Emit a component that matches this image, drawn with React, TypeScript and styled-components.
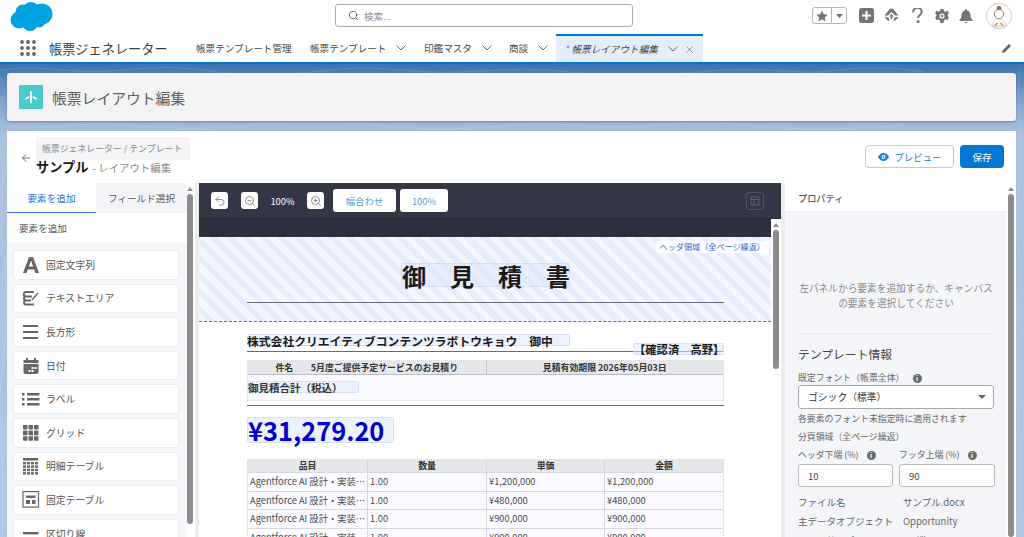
import React from "react";
import styled, { createGlobalStyle } from "styled-components";
import { ArrowLeft, Search, Undo2, X, ZoomIn, ZoomOut } from "lucide-react";

const Global = createGlobalStyle`
  html, body { margin: 0; padding: 0; height: 100%; overflow: hidden; }
  body { font-family: "Noto Sans CJK JP", "Noto Sans", sans-serif; color: #444; text-spacing-trim: space-all; }
  #root { height: 100%; }
  * { box-sizing: border-box; }
`;

const Screen = styled.div`
  position: relative;
  isolation: isolate;
  width: 1024px;
  height: 537px;
  display: flex;
  flex-direction: column;
  overflow: hidden;
  background: linear-gradient(180deg, #3a70ad 62px, #7fa0cb 100px, #aac1df 135px, #b0c5e1 100%);
`;
const Contours = styled.svg`
  position: absolute;
  inset: 0;
  z-index: -1;
`;

const TopBar = styled.div`
  height: 34px;
  background: #fff;
  display: grid;
  grid-template-columns: 335px 298px 1fr;
  align-items: start;
`;
const LogoCell = styled.div`
  padding: 1px 0 0 10px;
`;
const SearchBox = styled.div`
  margin-top: 4px;
  height: 23px;
  border: 1px solid #b0adab;
  border-radius: 3px;
  display: flex;
  align-items: center;
  gap: 5px;
  padding-left: 12px;
  font-size: 9.5px;
  color: #8b8b8b;
`;
const Actions = styled.div`
  display: flex;
  align-items: center;
  height: 32px;
  padding-left: 179px;
`;
const FavGroup = styled.div`
  width: 35px;
  height: 17px;
  border: 1px solid #b5b5b5;
  border-radius: 3px;
  display: grid;
  grid-template-columns: 18px 1fr;
  align-items: center;
  justify-items: center;
  margin-top: -1px;
  & > div:last-child {
    border-left: 1px solid #b5b5b5;
    height: 100%;
    width: 100%;
    display: flex;
    align-items: center;
    justify-content: center;
  }
`;
const ActionIcon = styled.div<{ $gap: number }>`
  margin-left: ${(p) => p.$gap}px;
  display: flex;
  margin-top: -1px;
`;
const Avatar = styled.div`
  margin-left: 13px;
  width: 26px;
  height: 26px;
  border-radius: 50%;
  border: 1px solid #c9c9c9;
  background: #fff;
  display: flex;
  align-items: center;
  justify-content: center;
`;

const NavBar = styled.div`
  height: 30px;
  background: #fff;
  border-bottom: 2px solid #0176d3;
  display: flex;
  align-items: center;
  padding-left: 20px;
`;
const AppName = styled.div`
  margin-left: 13px;
  width: 147px;
  font-size: 13.2px;
  color: #3e3e3c;
  white-space: nowrap;
`;
const NavItem = styled.div<{ $w: number }>`
  width: ${(p) => p.$w}px;
  display: flex;
  align-items: center;
  font-size: 9.6px;
  color: #444;
  white-space: nowrap;
  gap: 10px;
`;
const ActiveTab = styled.div`
  width: 147px;
  height: 28px;
  align-self: flex-start;
  background: #e3eefa;
  border-top: 2px solid #0176d3;
  display: flex;
  align-items: center;
  padding-left: 8px;
  font-size: 9.6px;
  font-style: italic;
  color: #444;
  white-space: nowrap;
  & > b {
    color: #3c97e8;
    font-weight: 400;
    margin-right: 3px;
  }
  & > svg:first-of-type { margin-left: 10px; }
  & > svg:last-of-type { margin-left: 6px; }
`;
const NavEnd = styled.div`
  margin-left: auto;
  padding-right: 12px;
  display: flex;
`;

const PageHead = styled.div`
  margin: 9px 8px 0 7px;
  height: 48px;
  background: #f3f3f3;
  border-radius: 3px;
  box-shadow: 0 1px 2px rgba(0, 0, 0, 0.25);
  display: flex;
  align-items: center;
  gap: 9px;
  padding-left: 12px;
  font-size: 14.8px;
  color: #5e5e5e;
`;
const TealIcon = styled.div`
  width: 24px;
  height: 24px;
  background: #4bc9cb;
  display: flex;
  align-items: center;
  justify-content: center;
`;

const MainCard = styled.div`
  margin: 10px 8px 0 7px;
  flex: 1;
  min-height: 0;
  background: #fff;
  display: flex;
  flex-direction: column;
`;
const CardHead = styled.div`
  height: 52px;
  flex: none;
  display: flex;
  align-items: flex-start;
  padding: 6px 12px 0 13px;
`;
const Back = styled.div`
  display: flex;
  margin-top: 15px;
  width: 16px;
  color: #666;
`;
const Crumbs = styled.div`
  display: flex;
  flex-direction: column;
`;
const Crumb = styled.div`
  width: 154px;
  height: 23px;
  background: #f3f4f6;
  font-size: 8.9px;
  color: #8a8a8a;
  line-height: 23px;
  padding-left: 6px;
  white-space: nowrap;
`;
const TitleLine = styled.div`
  display: flex;
  align-items: baseline;
  gap: 4px;
  margin-top: -3px;
  & > strong { font-size: 13.2px; color: #181818; font-weight: 700; }
  & > span { font-size: 10.4px; color: #8a8a8a; }
`;
const HeadButtons = styled.div`
  margin-left: auto;
  margin-top: 8px;
  display: flex;
  gap: 6px;
`;
const OutlineBtn = styled.div`
  width: 89px;
  height: 23px;
  border: 1px solid #c9c9c9;
  border-radius: 4px;
  display: flex;
  align-items: center;
  justify-content: center;
  gap: 6px;
  font-size: 9.4px;
  color: #1b7fd6;
`;
const SaveBtn = styled.div`
  width: 44px;
  height: 23px;
  background: #0176d3;
  border-radius: 4px;
  color: #fff;
  font-size: 9.5px;
  display: flex;
  align-items: center;
  justify-content: center;
`;

const Columns = styled.div`
  flex: 1;
  min-height: 0;
  display: grid;
  grid-template-columns: 192px 586px 231px;
  background: #ececec;
`;
const Side = styled.div`
  display: flex;
  min-height: 0;
  overflow: hidden;
`;
const SideBody = styled.div<{ $w: number }>`
  width: ${(p) => p.$w}px;
  background: #fff;
  overflow: hidden;
`;
const Rail = styled.div<{ $w: number; $pad: number }>`
  width: ${(p) => p.$w}px;
  padding-left: ${(p) => p.$pad}px;
  background: #fff;
  display: flex;
  flex-direction: column;
  flex: none;
`;
const RailArrow = styled.div`
  margin-top: 4px;
  width: 0;
  height: 0;
  border-left: 3px solid transparent;
  border-right: 3px solid transparent;
  border-bottom: 4px solid #8c8c8c;
`;
const Thumb = styled.div<{ $h: number }>`
  margin-top: 3px;
  width: 6px;
  height: ${(p) => p.$h}px;
  background: #8c8c8c;
  border-radius: 3px;
`;

const PanelTabs = styled.div`
  height: 30px;
  display: grid;
  grid-template-columns: 89px 1fr;
  font-size: 9.6px;
`;
const PanelTab = styled.div<{ $active?: boolean }>`
  display: flex;
  align-items: center;
  justify-content: center;
  white-space: nowrap;
  color: ${(p) => (p.$active ? "#2f6fe0" : "#5a5a5a")};
  background: ${(p) => (p.$active ? "#fff" : "#f3f4f8")};
  border-bottom: ${(p) => (p.$active ? "1px solid #2f6fe0" : "none")};
`;
const PanelLabel = styled.div`
  height: 30px;
  padding-left: 12px;
  display: flex;
  align-items: center;
  font-size: 9.6px;
  color: #5a5a5a;
`;
const Palette = styled.div`
  background: #f5f6fa;
  padding: 7px 8px 0 6px;
  height: 400px;
  display: flex;
  flex-direction: column;
  gap: 4px;
`;
const PaletteItem = styled.div`
  flex: none;
  height: 29.6px;
  background: #fff;
  border: 1px solid #ececf0;
  border-radius: 3px;
  display: flex;
  align-items: center;
  font-size: 9.8px;
  color: #555;
  padding-left: 8px;
  gap: 6px;
  & > svg { flex: none; }
`;

const Center = styled.div`
  background: #fff;
  display: flex;
  flex-direction: column;
  min-height: 0;
  overflow: hidden;
  width: 582px;
`;
const ToolBar = styled.div`
  flex: none;
  height: 36px;
  background: #333745;
  border-bottom: 1px solid #2a2d39;
  display: flex;
  align-items: center;
  padding-left: 12px;
`;
const ToolBtn = styled.div<{ $ml?: number }>`
  width: 17px;
  height: 17px;
  background: #fff;
  border-radius: 3px;
  margin-left: ${(p) => p.$ml ?? 0}px;
  display: flex;
  align-items: center;
  justify-content: center;
  color: #777;
`;
const ZoomText = styled.div`
  width: 45px;
  margin-left: 2px;
  text-align: center;
  font-size: 9.4px;
  color: #fff;
`;
const TextBtn = styled.div<{ $w: number; $ml: number }>`
  width: ${(p) => p.$w}px;
  margin-left: ${(p) => p.$ml}px;
  height: 23px;
  background: #fff;
  border-radius: 3px;
  display: flex;
  align-items: center;
  justify-content: center;
  font-size: 9.4px;
  color: #4d9de0;
`;
const GhostBtn = styled.div`
  margin-left: auto;
  margin-right: 17px;
  width: 18px;
  height: 18px;
  border: 1px solid #4f5361;
  border-radius: 3px;
  display: flex;
  align-items: center;
  justify-content: center;
`;
const CanvasRow = styled.div`
  flex: 1;
  min-height: 0;
  display: flex;
`;
const CanvasScroll = styled.div`
  flex: 1;
  overflow: hidden;
  background: #fff;
`;
const DarkStrip = styled.div`
  height: 18px;
  background: #2c303d;
`;
const HeaderBand = styled.div`
  position: relative;
  height: 85px;
  border-bottom: 1px dashed #2f7bf5;
  background: repeating-linear-gradient(45deg, #f4f7ff 0 6px, #e4ecfd 6px 12px);
  padding: 26px 47px 0 48px;
`;
const BandTag = styled.div`
  position: absolute;
  top: 4px;
  right: 2px;
  padding: 0 4px;
  height: 12px;
  line-height: 12px;
  background: rgba(255, 255, 255, 0.85);
  font-size: 8.15px;
  color: #3566de;
  white-space: nowrap;
`;
const FieldBox = styled.div`
  background: rgba(221, 231, 252, 0.55);
  border: 1px dotted #c3cff0;
  border-radius: 2px;
  white-space: nowrap;
  color: #1a1a1a;
  font-weight: 700;
`;
const DocTitle = styled(FieldBox)`
  width: 169px;
  height: 24px;
  margin: 0 auto;
  font-size: 24px;
  line-height: 23px;
  text-align: center;
`;
const Rule = styled.div`
  height: 1px;
  background: #6b6b6b;
`;
const BandRule = styled(Rule)`
  margin-top: 15px;
`;
const DocBody = styled.div`
  position: relative;
  padding: 12px 47px 0 48px;
`;
const Company = styled(FieldBox)`
  width: 323px;
  height: 12px;
  font-size: 11.8px;
  line-height: 11px;
  text-indent: -1px;
`;
const CompanyRule = styled(Rule)`
  margin-top: 5px;
`;
const Stamp = styled(FieldBox)`
  position: absolute;
  left: 434px;
  top: 21px;
  width: 91px;
  height: 12px;
  font-size: 11.3px;
  line-height: 11px;
  text-align: center;
`;
const InfoBlock = styled.div`
  margin-top: 8px;
  height: 41px;
  background: #fbfbff;
  border: 1px dotted #cfcff0;
`;
const InfoHead = styled.div`
  height: 14px;
  display: grid;
  grid-template-columns: 1fr 1fr;
  background: #e6e7eb;
  border-bottom: 1px solid #b9bccb;
  font-size: 8.9px;
  font-weight: 700;
  line-height: 13px;
  color: #333;
  & > div { text-align: center; white-space: pre; }
  & > div + div { border-left: 1px solid #c4c6d0; }
`;
const TotalLabel = styled(FieldBox)`
  margin-top: 6px;
  width: 111px;
  height: 12px;
  font-size: 10.5px;
  line-height: 11px;
  color: #333;
  text-indent: -1px;
`;
const BlockRule = styled(Rule)`
  margin-top: 4px;
`;
const Amount = styled(FieldBox)`
  margin-top: 11px;
  width: 147px;
  height: 26px;
  font-size: 25.4px;
  line-height: 24px;
  color: #0000cd;
`;
const LineTable = styled.div`
  margin-top: 16px;
  border: 1px dotted #c5c5ea;
  border-bottom: none;
`;
const LineRow = styled.div<{ $head?: boolean }>`
  display: grid;
  grid-template-columns: 119px 119px 118px 1fr;
  height: ${(p) => (p.$head ? "13px" : "18.7px")};
  background: ${(p) => (p.$head ? "#e6e7eb" : "#fbfbff")};
  border-bottom: 1px solid #d6d7de;
  font-size: ${(p) => (p.$head ? "8.9px" : "9.3px")};
  font-weight: ${(p) => (p.$head ? 700 : 400)};
  color: ${(p) => (p.$head ? "#333" : "#4a4a4a")};
  line-height: ${(p) => (p.$head ? "12px" : "17px")};
  & > div {
    padding: 0 ${(p) => (p.$head ? 0 : 2)}px;
    text-align: ${(p) => (p.$head ? "center" : "left")};
    white-space: nowrap;
  }
  & > div + div { border-left: 1px solid #d6d7de; }
`;

const PropBody = styled.div`
  background: #f3f5f9;
  height: 360px;
  padding: 0 12px 0 13px;
`;
const PropTitle = styled.div`
  height: 29px;
  background: #fff;
  border-bottom: 1px solid #eceef2;
  padding: 2px 0 0 13px;
  display: flex;
  align-items: center;
  font-size: 9.2px;
  font-weight: 500;
  color: #5a5a5a;
`;
const EmptyNote = styled.div`
  padding-top: 69px;
  height: 122px;
  border-bottom: 1px solid #e6e8ec;
  text-align: center;
  font-size: 9.7px;
  line-height: 15px;
  color: #8a8a8a;
  white-space: nowrap;
`;
const SectionTitle = styled.div`
  margin-top: 11px;
  font-size: 11.8px;
  color: #444;
  line-height: 18px;
`;
const FieldLabel = styled.div<{ $mt?: number }>`
  margin-top: ${(p) => p.$mt ?? 0}px;
  display: flex;
  align-items: center;
  gap: 8px;
  font-size: 8.9px;
  line-height: 14px;
  color: #666;
  white-space: nowrap;
`;
const InfoDot = styled.span`
  width: 9px;
  height: 9px;
  border-radius: 50%;
  background: #6b6b6b;
  color: #fff;
  font-size: 6.5px;
  line-height: 9px;
  text-align: center;
  font-weight: 700;
`;
const SelectBox = styled.div`
  height: 24px;
  background: #fff;
  border: 1px solid #a9a9a9;
  border-radius: 3px;
  display: flex;
  align-items: center;
  justify-content: space-between;
  padding: 0 7px 0 9px;
  font-size: 9.8px;
  color: #333;
`;
const Caret = styled.span`
  width: 0;
  height: 0;
  border-left: 4px solid transparent;
  border-right: 4px solid transparent;
  border-top: 4px solid #666;
`;
const HalfGrid = styled.div`
  margin-top: 4px;
  display: grid;
  grid-template-columns: 95px 96px;
  gap: 2px 6px;
`;
const NumberBox = styled.div`
  height: 23px;
  background: #fff;
  border: 1px solid #b9b9b9;
  border-radius: 3px;
  display: flex;
  align-items: center;
  padding-left: 9px;
  font-size: 9.5px;
  color: #444;
`;
const MetaList = styled.div`
  margin-top: 6px;
`;
const MetaRow = styled.div`
  display: grid;
  grid-template-columns: 105px 1fr;
  height: 19px;
  font-size: 9.5px;
  line-height: 19px;
  color: #666;
  white-space: nowrap;
`;

const Cloud = () => (
  <svg width="43" height="31" viewBox="0 0 43 31">
    <g fill="#00a1e0">
      <circle cx="13" cy="11" r="7.5" />
      <circle cx="21" cy="9" r="8" />
      <circle cx="32" cy="13" r="10.5" />
      <circle cx="9" cy="19" r="8.5" />
      <circle cx="20" cy="22" r="8" />
      <circle cx="29" cy="20" r="6.5" />
    </g>
  </svg>
);

const Waffle = () => (
  <svg width="16" height="16" viewBox="0 0 16 16" fill="#666">
    {[2, 8, 14].flatMap((y) => [2, 8, 14].map((x) => <circle key={`${x}-${y}`} cx={x} cy={y} r="1.9" />))}
  </svg>
);

const Chev = () => (
  <svg width="10" height="6" viewBox="0 0 10 6" fill="none" stroke="#666" strokeWidth="1">
    <path d="M.5.5L5 5 9.500.5" />
  </svg>
);

const Avatarish = () => (
  <svg width="20" height="22" viewBox="0 0 20 22">
    <circle cx="10" cy="3.500" r="2.400" fill="#8a6d5c" />
    <circle cx="10" cy="9" r="4.600" fill="#fff" stroke="#8a6d5c" strokeWidth="0.9" />
    <path d="M3 21c1-5 4-7 7-7s6 2 7 7z" fill="#fff" stroke="#bbb" strokeWidth="0.7" />
    <path d="M5.500 21l3-3M14.500 21l-3-3" stroke="#e8a04a" strokeWidth="1.8" />
  </svg>
);

const PALETTE: { label: string; icon: React.ReactNode }[] = [
  {
    label: "固定文字列",
    icon: (
      <svg width="18" height="18" viewBox="0 0 18 18" fill="#666">
        <path d="M7 1h4l6 16h-3.600l-1.200-3.400H5.800L4.600 17H1zm-.2 9.600h4.400L9 4.400z" />
      </svg>
    ),
  },
  {
    label: "テキストエリア",
    icon: (
      <svg width="18" height="16" viewBox="0 0 18 16" fill="none" stroke="#666" strokeWidth="2">
        <path d="M12 2H4a2 2 0 000 4.500h6M4 6.500a2 2 0 000 4h5M4 10.500a2 2 0 000 4h8" />
        <path d="M10 10l6-7" strokeWidth="1.500" />
      </svg>
    ),
  },
  {
    label: "長方形",
    icon: (
      <svg width="18" height="14" viewBox="0 0 18 14" fill="#666">
        <path d="M1 0h15v2H1zM1 6h15v2H1zM1 12h15v2H1z" />
      </svg>
    ),
  },
  {
    label: "日付",
    icon: (
      <svg width="18" height="16" viewBox="0 0 18 16" fill="#666">
        <path d="M4 0h2v2h6V0h2v2h2.500v3h-15V2H4zM1.500 6h15v8a2 2 0 01-2 2h-11a2 2 0 01-2-2zm8 3v2h2V9zm3 0v2h2V9zm-6 3v2h2v-2zm3 0v2h2v-2z" fillRule="evenodd" />
      </svg>
    ),
  },
  {
    label: "ラベル",
    icon: (
      <svg width="18" height="13" viewBox="0 0 18 13" fill="#666">
        <path d="M0 0h2.500v2.500H0zM5 0h12.500v2.500H5zM0 5h2.500v2.500H0zM5 5h12.500v2.500H5zM0 10h2.500v2.500H0zM5 10h12.500v2.500H5z" />
      </svg>
    ),
  },
  {
    label: "グリッド",
    icon: (
      <svg width="18" height="16" viewBox="0 0 18 16" fill="#666">
        {[0, 5.6, 11.2].flatMap((y) =>
          [1, 6.5, 12].map((x) => <rect key={`${x}-${y}`} x={x} y={y} width="4.500" height="4.600" rx="0.8" />)
        )}
      </svg>
    ),
  },
  {
    label: "明細テーブル",
    icon: (
      <svg width="18" height="17" viewBox="0 0 18 17" fill="#666">
        <rect x="1" y="0" width="15" height="2.500" />
        {[4, 7.4, 10.8, 14.2].flatMap((y) =>
          [1, 5, 9, 13].map((x) => <rect key={`${x}-${y}`} x={x} y={y} width="3" height="2.400" />)
        )}
      </svg>
    ),
  },
  {
    label: "固定テーブル",
    icon: (
      <svg width="18" height="17" viewBox="0 0 18 17" fill="none" stroke="#666">
        <rect x="1" y="0.600" width="15.500" height="15.500" strokeWidth="1.200" />
        <path d="M4 4.500h9.500v2.500H4zM4 9h4v4H4zM10 9h3.500v4H10z" fill="#666" stroke="none" />
      </svg>
    ),
  },
  {
    label: "区切り線",
    icon: (
      <svg width="18" height="3" viewBox="0 0 18 3" fill="#666">
        <rect x="1" y="0" width="15.500" height="2.400" />
      </svg>
    ),
  },
];

const ROWS = [
  ["Agentforce AI 設計・実装…", "1.00", "¥1,200,000", "¥1,200,000"],
  ["Agentforce AI 設計・実装…", "1.00", "¥480,000", "¥480,000"],
  ["Agentforce AI 設計・実装…", "1.00", "¥900,000", "¥900,000"],
  ["Agentforce AI 設計・実装…", "1.00", "¥900,000", "¥900,000"],
];

export default function App() {
  return (
    <Screen>
      <Global />
      <Contours width="1024" height="537" fill="none" stroke="#fff" strokeOpacity="0.13" strokeWidth="1">
        <path d="M0 70c40-6 70 4 110 1s60-6 100 0 70 5 120-1 80 4 130 2 60-5 110 0 90 4 140-1 90 4 120 0 60-5 94 1" />
        <path d="M0 126c50 4 80-5 130-1s70 5 120 0 90-4 140 1 70 3 120-1 80 4 130 1 70-5 120 0 90 3 144-1" />
        <path d="M2 140c5 40-4 70 1 110s4 80-1 120 3 90 0 167M1012 140c5 40-4 70 1 110s4 80-1 120 3 90 0 167" />
        <path d="M1020 66c-4 40 3 70-1 120s4 90 0 140 3 120-1 211M-4 200c10-20 12-40 10-60M-4 300c10-20 12-40 10-60" />
      </Contours>
      <TopBar>
        <LogoCell>
          <Cloud />
        </LogoCell>
        <SearchBox>
          <Search size={11} color="#666" strokeWidth={2} />
          検索...
        </SearchBox>
        <Actions>
          <FavGroup>
            <svg width="12" height="12" viewBox="0 0 24 24" fill="#747474">
              <path d="M12 1l3.400 7.500 8 .9-6 5.400 1.700 8L12 18.700 4.900 22.800l1.700-8-6-5.400 8-.9z" />
            </svg>
            <div>
              <svg width="7" height="4" viewBox="0 0 7 4" fill="#747474">
                <path d="M0 0h7L3.500 4z" />
              </svg>
            </div>
          </FavGroup>
          <ActionIcon $gap={12}>
            <svg width="15" height="15" viewBox="0 0 15 15">
              <rect width="15" height="15" rx="2.500" fill="#747474" />
              <path d="M6.500 3h2v3.500H12v2H8.500V12h-2V8.500H3v-2h3.500z" fill="#fff" />
            </svg>
          </ActionIcon>
          <ActionIcon $gap={10}>
            <svg width="15" height="15" viewBox="0 0 15 15" fill="#747474">
              <path d="M7.500.5c1.400 0 2.400.8 2.900 1.900l4.100 5.100H11L7.500 4 4 7.500H.5l4.100-5.100C5.100 1.300 6.100.5 7.500.5z" />
              <path d="M7.500 6L10 8.500H8.300V11H6.700V8.500H5zM.8 8.800l3.700.6 1 3.600C3.300 12.800 1.500 11 .8 8.800zM14.200 8.800l-3.700.6-1 3.600c2.200-.2 4-2 4.700-4.200z" />
            </svg>
          </ActionIcon>
          <ActionIcon $gap={13}>
            <svg width="12" height="15" viewBox="0 0 12 15" fill="none" stroke="#747474" strokeWidth="2">
              <path d="M1.500 4.500a4.200 3.600 0 118 0c0 2.200-3.500 2.800-3.500 5.500" />
              <circle cx="6" cy="13.500" r="0.6" fill="#747474" />
            </svg>
          </ActionIcon>
          <ActionIcon $gap={11}>
            <svg width="14" height="14" viewBox="0 0 14 14">
              <path
                fill="#747474"
                d="M5.500 0h3l.4 2 1.700.7L12.300 1.600l1.700 2.600-1.400 1.400.1 1.400 1.300 1.400-1.500 2.600-1.900-.7-1.500 1L8.500 14h-3l-.5-2.600-1.500-1-1.900.7L.1 8.500l1.300-1.400.1-1.400L0 4.200l1.700-2.600 1.700 1.100L5.100 2z"
              />
              <circle cx="7" cy="7" r="2.600" fill="#fff" />
              <circle cx="7" cy="7" r="1.300" fill="#747474" />
            </svg>
          </ActionIcon>
          <ActionIcon $gap={10}>
            <svg width="14" height="14" viewBox="0 0 14 14" fill="#747474">
              <path d="M7 0a1 1 0 011 1v.6c2.300.5 3.500 2.400 3.500 4.400 0 3 1 3.800 2 5v1H.5v-1c1-1.200 2-2 2-5 0-2 1.200-3.900 3.500-4.400V1a1 1 0 011-1zM5.500 13h3a1.500 1.500 0 01-3 0z" />
            </svg>
          </ActionIcon>
          <Avatar>
            <Avatarish />
          </Avatar>
        </Actions>
      </TopBar>

      <NavBar>
        <Waffle />
        <AppName>帳票ジェネレーター</AppName>
        <NavItem $w={114}>帳票テンプレート管理</NavItem>
        <NavItem $w={114}>
          帳票テンプレート
          <Chev />
        </NavItem>
        <NavItem $w={85}>
          印鑑マスタ
          <Chev />
        </NavItem>
        <NavItem $w={47}>
          商談
          <Chev />
        </NavItem>
        <ActiveTab>
          <b>*</b>帳票レイアウト編集
          <Chev />
          <X size={11} color="#666" strokeWidth={1.4} />
        </ActiveTab>
        <NavEnd>
          <svg width="11" height="11" viewBox="0 0 11 11" fill="#666">
            <path d="M8 1l2 2-6.500 6.500L1 10l.5-2.500z" />
          </svg>
        </NavEnd>
      </NavBar>

      <PageHead>
        <TealIcon>
          <svg width="14" height="14" viewBox="0 0 16 16" fill="#fff">
            <path d="M7 1h2v14H7zM1 9.500l5-3v2.500l-4 2zM15 9.500l-5-3v2.500l4 2z" />
          </svg>
        </TealIcon>
        帳票レイアウト編集
      </PageHead>

      <MainCard>
        <CardHead>
          <Back>
            <ArrowLeft size={12} strokeWidth={1.8} />
          </Back>
          <Crumbs>
            <Crumb>帳票ジェネレーター / テンプレート</Crumb>
            <TitleLine>
              <strong>サンプル</strong>
              <span>- レイアウト編集</span>
            </TitleLine>
          </Crumbs>
          <HeadButtons>
            <OutlineBtn>
              <svg width="11" height="8" viewBox="0 0 11 8">
                <path d="M5.500 0C8 0 10 1.800 11 4c-1 2.200-3 4-5.500 4S1 6.200 0 4c1-2.200 3-4 5.500-4z" fill="#1b7fd6" />
                <circle cx="5.500" cy="4" r="2" fill="#fff" />
                <circle cx="5.500" cy="4" r="1" fill="#1b7fd6" />
              </svg>
              プレビュー
            </OutlineBtn>
            <SaveBtn>保存</SaveBtn>
          </HeadButtons>
        </CardHead>

        <Columns>
          <Side>
            <SideBody $w={180}>
              <PanelTabs>
                <PanelTab $active>要素を追加</PanelTab>
                <PanelTab>フィールド選択</PanelTab>
              </PanelTabs>
              <PanelLabel>要素を追加</PanelLabel>
              <Palette>
                {PALETTE.map((p) => (
                  <PaletteItem key={p.label}>
                    {p.icon}
                    {p.label}
                  </PaletteItem>
                ))}
              </Palette>
            </SideBody>
            <Rail $w={8} $pad={0}>
              <RailArrow />
              <Thumb $h={330} />
            </Rail>
          </Side>

          <Center>
            <ToolBar>
              <ToolBtn>
                <Undo2 size={12} strokeWidth={1.6} />
              </ToolBtn>
              <ToolBtn $ml={13}>
                <ZoomOut size={12} strokeWidth={1.6} />
              </ToolBtn>
              <ZoomText>100%</ZoomText>
              <ToolBtn $ml={2}>
                <ZoomIn size={12} strokeWidth={1.6} />
              </ToolBtn>
              <TextBtn $w={63} $ml={9}>
                幅合わせ
              </TextBtn>
              <TextBtn $w={48} $ml={4}>
                100%
              </TextBtn>
              <GhostBtn>
                <svg width="10" height="10" viewBox="0 0 10 10" fill="none" stroke="#5d6170">
                  <rect x="1" y="1" width="8" height="8" />
                  <path d="M1 3.500h8M4 3.500V9" />
                </svg>
              </GhostBtn>
            </ToolBar>
            <CanvasRow>
              <CanvasScroll>
                <DarkStrip />
                <HeaderBand>
                  <BandTag>ヘッダ領域（全ページ繰返）</BandTag>
                  <DocTitle>御　見　積　書</DocTitle>
                  <BandRule />
                </HeaderBand>
                <DocBody>
                  <Company>株式会社クリエイティブコンテンツラボトウキョウ　御中</Company>
                  <CompanyRule />
                  <Stamp>【確認済　高野】</Stamp>
                  <InfoBlock>
                    <InfoHead>
                      <div>件名　　5月度ご提供予定サービスのお見積り</div>
                      <div>見積有効期限 2026年05月03日</div>
                    </InfoHead>
                    <TotalLabel>御見積合計（税込）</TotalLabel>
                  </InfoBlock>
                  <BlockRule />
                  <Amount>¥31,279.20</Amount>
                  <LineTable>
                    <LineRow $head>
                      <div>品目</div>
                      <div>数量</div>
                      <div>単価</div>
                      <div>金額</div>
                    </LineRow>
                    {ROWS.map((r, i) => (
                      <LineRow key={i}>
                        {r.map((c, j) => (
                          <div key={j}>{c}</div>
                        ))}
                      </LineRow>
                    ))}
                  </LineTable>
                </DocBody>
              </CanvasScroll>
              <Rail $w={10} $pad={2}>
                <RailArrow />
                <Thumb $h={139} />
              </Rail>
            </CanvasRow>
          </Center>

          <Side>
            <SideBody $w={221}>
              <PropTitle>プロパティ</PropTitle>
              <PropBody>
                <EmptyNote>
                  左パネルから要素を追加するか、キャンバス
                  <br />
                  の要素を選択してください
                </EmptyNote>
                <SectionTitle>テンプレート情報</SectionTitle>
                <FieldLabel $mt={8}>
                  既定フォント（帳票全体）<InfoDot>i</InfoDot>
                </FieldLabel>
                <SelectBox>
                  ゴシック（標準）
                  <Caret />
                </SelectBox>
                <FieldLabel $mt={3}>各要素のフォント未指定時に適用されます</FieldLabel>
                <FieldLabel $mt={4}>分頁領域（全ページ繰返）</FieldLabel>
                <HalfGrid>
                  <FieldLabel>
                    ヘッダ下端 (%)<InfoDot>i</InfoDot>
                  </FieldLabel>
                  <FieldLabel>
                    フッタ上端 (%)<InfoDot>i</InfoDot>
                  </FieldLabel>
                  <NumberBox>10</NumberBox>
                  <NumberBox>90</NumberBox>
                </HalfGrid>
                <MetaList>
                  <MetaRow>
                    <span>ファイル名</span>
                    <span>サンプル.docx</span>
                  </MetaRow>
                  <MetaRow>
                    <span>主データオブジェクト</span>
                    <span>Opportunity</span>
                  </MetaRow>
                  <MetaRow>
                    <span>ページサイズ</span>
                    <span>A4 縦</span>
                  </MetaRow>
                </MetaList>
              </PropBody>
            </SideBody>
            <Rail $w={10} $pad={2}>
              <RailArrow />
              <Thumb $h={400} />
            </Rail>
          </Side>
        </Columns>
      </MainCard>
    </Screen>
  );
}
